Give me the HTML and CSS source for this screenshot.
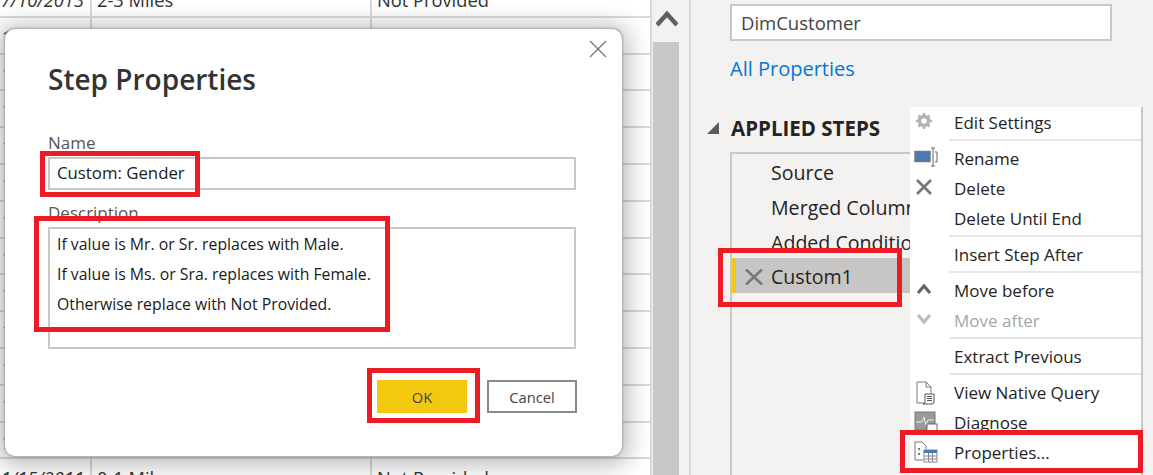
FILE: index.html
```html
<!DOCTYPE html>
<html lang="en">
<head>
  <meta charset="UTF-8" />
  <title>Step Properties</title>
  <link rel="stylesheet" href="styles.css">
</head>
<body>

  <div class="grid">
    <div class="row"><span class="date">7/10/2013</span><span>2-3 Miles</span><span>Not Provided</span></div>
    <div class="row"><span class="date">1/14/2011</span><span>0-1 Miles</span><span>Not Provided</span></div>
    <div class="row"><span class="date">1/12/2011</span><span></span><span></span></div>
    <div class="row"><span class="date">1/10/2012</span><span></span><span></span></div>
    <div class="row"><span class="date">1/21/2013</span><span></span><span></span></div>
    <div class="row"><span class="date">1/15/2012</span><span></span><span></span></div>
    <div class="row"><span class="date">1/27/2011</span><span></span><span></span></div>
    <div class="row"><span class="date">1/11/2012</span><span></span><span></span></div>
    <div class="row"><span class="date">1/11/2013</span><span></span><span></span></div>
    <div class="row"><span class="date">1/11/2012</span><span></span><span></span></div>
    <div class="row"><span class="date">1/12/2011</span><span></span><span></span></div>
    <div class="row"><span class="date">1/19/2013</span><span></span><span></span></div>
    <div class="row"><span class="date">1/19/2012</span><span></span><span></span></div>
    <div class="row"><span class="date">1/15/2011</span><span>0-1 Miles</span><span>Not Provided</span></div>
  </div>

  <div class="gutter">
    <svg class="gutter-arrow" width="22" height="16" viewBox="0 0 22 16"><path d="M1 14 L11 3 L21 14" fill="none" stroke="#5f5f5f" stroke-width="4.5"/></svg>
    <div class="thumb"></div>
  </div>

  <div class="panel">
    <div class="query-name">DimCustomer</div>
    <a class="all-props">All Properties</a>
    <div class="steps-title">
      <svg width="12" height="12" viewBox="0 0 12 12"><path d="M12 0 V12 H0 Z" fill="#5a5a5a"/></svg>
      <span>APPLIED STEPS</span>
    </div>
    <div class="steps">
      <div class="step">Source</div>
      <div class="step">Merged Columns</div>
      <div class="step">Added Conditional Column</div>
      <div class="step step-on">
        <svg width="18" height="16" viewBox="0 0 18 16"><path d="M1 0.5 L17 15.5 M17 0.5 L1 15.5" stroke="#777" stroke-width="2.6"/></svg>
        <span>Custom1</span>
      </div>
    </div>
  </div>

  <div class="dialog">
    <svg class="dialog-close" width="18" height="18" viewBox="0 0 18 18"><path d="M1 1 L17 17 M17 1 L1 17" stroke="#777" stroke-width="1.3"/></svg>
    <h1>Step Properties</h1>
    <label class="lbl-name">Name</label>
    <div class="field">Custom: Gender</div>
    <label class="lbl-desc">Description</label>
    <div class="field field-big">
      <p>If value is Mr. or Sr. replaces with Male.</p>
      <p>If value is Ms. or Sra. replaces with Female.</p>
      <p>Otherwise replace with Not Provided.</p>
    </div>
    <div class="dialog-btns">
      <button class="btn btn-ok">OK</button>
      <button class="btn">Cancel</button>
    </div>
  </div>

  <div class="menu">
    <div class="item">
      <svg class="ico" width="20" height="20" viewBox="0 0 20 20"><circle cx="10" cy="10" r="4.5" fill="none" stroke="#b4b4b4" stroke-width="3.5"/><path d="M10 2 V18 M2 10 H18 M4.5 4.5 L15.500 15.500 M15.500 4.500 L4.500 15.500" stroke="#b4b4b4" stroke-width="2.600" stroke-dasharray="3.500 9 3.500"/></svg>
      <span>Edit Settings</span>
    </div>
    <div class="sep"></div>
    <div class="item">
      <svg class="ico" width="24" height="20" viewBox="0 0 24 20"><rect x="1" y="4.500" width="15" height="10" fill="#4a7ab5" stroke="#777" stroke-width="1.500"/><path d="M17 1 H21 M19 1 V19 M17 19 H21 M21 5 H23 V15 H21" fill="none" stroke="#666" stroke-width="1"/></svg>
      <span>Rename</span>
    </div>
    <div class="item">
      <svg class="ico" width="20" height="20" viewBox="0 0 20 20"><path d="M3 3 L17 17 M17 3 L3 17" stroke="#777" stroke-width="2.800"/></svg>
      <span>Delete</span>
    </div>
    <div class="item"><span class="no-ico">Delete Until End</span></div>
    <div class="sep"></div>
    <div class="item"><span class="no-ico">Insert Step After</span></div>
    <div class="sep"></div>
    <div class="item">
      <svg class="ico" width="20" height="20" viewBox="0 0 20 20"><path d="M4 14 L10 7 L16 14" fill="none" stroke="#666" stroke-width="3.200"/></svg>
      <span>Move before</span>
    </div>
    <div class="item item-off">
      <svg class="ico" width="20" height="20" viewBox="0 0 20 20"><path d="M4 6 L10 13 L16 6" fill="none" stroke="#bcbcbc" stroke-width="3.200"/></svg>
      <span>Move after</span>
    </div>
    <div class="sep"></div>
    <div class="item"><span class="no-ico">Extract Previous</span></div>
    <div class="sep"></div>
    <div class="item">
      <svg class="ico" width="22" height="24" viewBox="0 0 22 24"><path d="M3 1 H12 L17 6 V22 H3 Z M12 1 V6 H17" fill="#fff" stroke="#777" stroke-width="1"/><path d="M11 13 H20 V21 Q20 23 18 23 H9 Q11 23 11 21 Z" fill="#fff" stroke="#555" stroke-width="1"/><path d="M13 15.500 H18 M13 17.500 H18 M13 19.500 H18" stroke="#555" stroke-width="1"/></svg>
      <span>View Native Query</span>
    </div>
    <div class="item">
      <svg class="ico" width="24" height="22" viewBox="0 0 24 22"><rect x="1" y="1" width="20" height="18" fill="#9a9a9a" stroke="#777" stroke-width="1"/><path d="M2 11 H8 L10 6 L12 14 L14 9 H20" fill="none" stroke="#eee" stroke-width="1"/><rect x="13" y="13" width="10" height="9" fill="#fff" stroke="#666" stroke-width="1"/></svg>
      <span>Diagnose</span>
    </div>
    <div class="item">
      <svg class="ico" width="24" height="22" viewBox="0 0 24 22"><path d="M1 1 H8 L12 5 V8 M1 1 V19 H9" fill="none" stroke="#777" stroke-width="1"/><path d="M4 8 h2 M4 13 h2" stroke="#777" stroke-width="2"/><rect x="10" y="9" width="13" height="12" fill="#fff" stroke="#888" stroke-width="1"/><rect x="10" y="9" width="13" height="3" fill="#4a7ab5"/><path d="M14.500 12 V21 M18.500 12 V21 M10 15 H23 M10 18 H23" stroke="#888" stroke-width="1"/></svg>
      <span>Properties...</span>
    </div>
  </div>

  <div class="mark mark-name"></div>
  <div class="mark mark-desc"></div>
  <div class="mark mark-ok"></div>
  <div class="mark mark-step"></div>
  <div class="mark mark-menu"></div>

</body>
</html>
```

FILE: styles.css
```css
html, body {
  height: 100%;
}

body {
  margin: 0;
  display: flex;
  overflow: hidden;
  position: relative;
  font-family: "Open Sans", "Noto Sans", sans-serif;
  color: #252423;
  background-color: #fff;
}

/* data grid behind the dialog */
.grid {
  width: 650px;
  flex: none;
  margin-top: -19px;
  font-size: 18.3px;
  color: #333;
}

.row {
  display: grid;
  grid-template-columns: 92px 280px 1fr;
  height: 36.8px;
  box-sizing: border-box;
  border-bottom: 2px solid #d9d9d9;
  line-height: 38px;
}

.row span {
  padding-left: 5px;
  border-right: 2px solid #d9d9d9;
  white-space: nowrap;
}

.row span:last-child {
  border-right: none;
}

.row .date {
  padding: 0 6px 0 0;
  text-align: right;
  font-style: italic;
}

.gutter {
  width: 37px;
  flex: none;
  display: flex;
  flex-direction: column;
  align-items: flex-start;
  border-left: 2px solid #d9d9d9;
  background-color: #f3f2f1;
}

.gutter-arrow {
  margin: 11px 0 0 4px;
  flex: none;
}

.thumb {
  width: 26px;
  flex: 1;
  margin: 15px 0 0 1px;
  background-color: #c8c8c8;
}

/* query settings */
.panel {
  flex: 1;
  padding: 4px 0 0 39px;
  border-left: 2px solid #d9d9d9;
  background-color: #f3f2f1;
}

.query-name {
  width: 382px;
  height: 37px;
  box-sizing: border-box;
  padding-left: 9px;
  border: 2px solid #c8c8c8;
  background-color: #fff;
  font-size: 18.5px;
  line-height: 34px;
  color: #444;
}

.all-props {
  display: block;
  margin-top: 14px;
  font-size: 20px;
  line-height: 28px;
  color: #0078d4;
}

.steps-title {
  display: flex;
  align-items: center;
  margin: 31px 0 0 -23px;
  gap: 12px;
  font-size: 20.5px;
  line-height: 28px;
  font-weight: 700;
}

.steps {
  width: 381px;
  height: 340px;
  box-sizing: border-box;
  margin-top: 10px;
  border: 2px solid #c8c8c8;
}

.step {
  padding-left: 39px;
  height: 34.8px;
  font-size: 19.6px;
  line-height: 37px;
  white-space: nowrap;
}

.step-on {
  display: flex;
  align-items: center;
  box-sizing: border-box;
  padding: 2px 0 0 9px;
  gap: 8px;
  border-left: 4px solid #f2c811;
  background-color: #c8c6c4;
}

/* dialog */
.dialog {
  position: absolute;
  left: 5px;
  top: 29px;
  width: 617px;
  height: 427px;
  box-sizing: border-box;
  padding: 30px 46px 0 43px;
  border-radius: 10px;
  background-color: #fff;
  box-shadow: 0 0 2px 1px #a8a8a8, 0 3px 24px 6px rgba(0, 0, 0, 0.28);
}

.dialog-close {
  position: absolute;
  right: 15px;
  top: 11px;
}

.dialog h1 {
  margin: 0;
  font-size: 28px;
  line-height: 40px;
  font-weight: 600;
  color: #333;
}

.dialog label {
  display: block;
  font-size: 17px;
  line-height: 22px;
  color: #555;
}

.lbl-name {
  margin-top: 33px;
}

.lbl-desc {
  margin-top: 12px;
}

.field {
  height: 33px;
  margin-top: 3px;
  box-sizing: border-box;
  padding-left: 7px;
  border: 2px solid #c8c8c8;
  font-size: 16.8px;
  line-height: 27px;
  color: #1a1a1a;
}

.field-big {
  height: 122px;
  font-size: 15.8px;
}

.field-big p {
  margin: 0;
  height: 30px;
  line-height: 31px;
}

.dialog-btns {
  display: flex;
  justify-content: flex-end;
  gap: 20px;
  margin: 31px -1px 0 0;
}

.btn {
  width: 90px;
  height: 33px;
  padding: 0;
  border: 2px solid #8a8a8a;
  background-color: #fff;
  font-family: inherit;
  font-size: 14.7px;
  color: #444;
}

.btn-ok {
  border: none;
  background-color: #f2c811;
}

/* context menu */
.menu {
  position: absolute;
  left: 910px;
  top: 107px;
  width: 233px;
  height: 368px;
  box-sizing: border-box;
  border-right: 2px solid #c8c8c8;
  background-color: #fff;
  font-size: 17px;
}

.item {
  position: relative;
  height: 30px;
  display: flex;
  align-items: center;
  padding-left: 44px;
  white-space: nowrap;
}

.item-off {
  color: #a6a6a6;
}

.ico {
  position: absolute;
  left: 4px;
  top: 4px;
}

.sep {
  height: 2px;
  margin: 2px 0 2px 39px;
  background-color: #e6e6e6;
}

/* red annotation boxes */
.mark {
  position: absolute;
  box-sizing: border-box;
  border: 5px solid #ed1c24;
}

.mark-name {
  left: 40px;
  top: 151px;
  width: 160px;
  height: 46px;
}

.mark-desc {
  left: 34px;
  top: 216px;
  width: 356px;
  height: 116px;
}

.mark-ok {
  left: 367px;
  top: 368px;
  width: 113px;
  height: 55px;
}

.mark-step {
  left: 718px;
  top: 248px;
  width: 184px;
  height: 59px;
}

.mark-menu {
  left: 900px;
  top: 430px;
  width: 243px;
  height: 43px;
}
```
